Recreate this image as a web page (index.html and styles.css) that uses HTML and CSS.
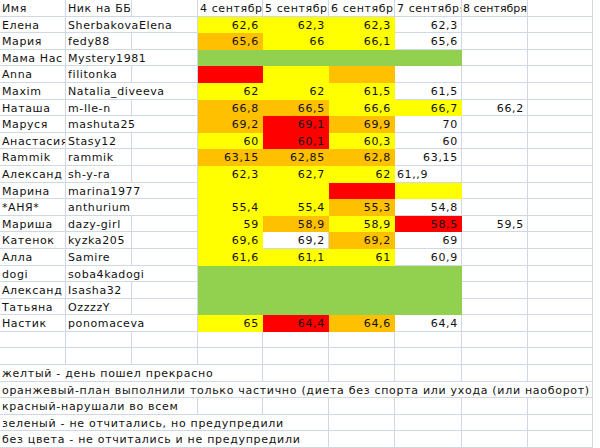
FILE: index.html
```html
<!DOCTYPE html>
<html lang="ru">
<head>
<meta charset="utf-8">
<title>Таблица</title>
<link rel="stylesheet" href="styles.css">
</head>
<body>
<div class="sheet">
  <div class="c">Имя</div><div class="c">Ник на ББ</div><div class="c"></div><div class="c">4 сентября</div><div class="c">5 сентября</div><div class="c">6 сентября</div><div class="c">7 сентября</div><div class="c h8">8 сентября</div><div class="c"></div>

  <div class="c">Елена</div><div class="c s2">SherbakovaElena</div><div class="c n y">62,6</div><div class="c n y">62,3</div><div class="c n y">62,3</div><div class="c n">62,3</div><div class="c"></div><div class="c"></div>

  <div class="c">Мария</div><div class="c">fedy88</div><div class="c"></div><div class="c n o">65,6</div><div class="c n y">66</div><div class="c n y">66,1</div><div class="c n">65,6</div><div class="c"></div><div class="c"></div>

  <div class="c">Мама Нас</div><div class="c s2">Mystery1981</div><div class="c g"></div><div class="c g"></div><div class="c g"></div><div class="c g"></div><div class="c"></div><div class="c"></div>

  <div class="c">Anna</div><div class="c">filitonka</div><div class="c"></div><div class="c r"></div><div class="c y"></div><div class="c o"></div><div class="c"></div><div class="c"></div><div class="c"></div>

  <div class="c">Maxim</div><div class="c s2">Natalia_diveeva</div><div class="c n y">62</div><div class="c n y">62</div><div class="c n y">61,5</div><div class="c n">61,5</div><div class="c"></div><div class="c"></div>

  <div class="c">Наташа</div><div class="c">m-lle-n</div><div class="c"></div><div class="c n o">66,8</div><div class="c n o">66,5</div><div class="c n y">66,6</div><div class="c n y">66,7</div><div class="c n">66,2</div><div class="c"></div>

  <div class="c">Маруся</div><div class="c s2">mashuta25</div><div class="c n o">69,2</div><div class="c n r">69,1</div><div class="c n o">69,9</div><div class="c n">70</div><div class="c"></div><div class="c"></div>

  <div class="c">Анастасия</div><div class="c">Stasy12</div><div class="c"></div><div class="c n y">60</div><div class="c n r">60,1</div><div class="c n y">60,3</div><div class="c n">60</div><div class="c"></div><div class="c"></div>

  <div class="c">Rammik</div><div class="c">rammik</div><div class="c"></div><div class="c n o">63,15</div><div class="c n o">62,85</div><div class="c n o">62,8</div><div class="c n">63,15</div><div class="c"></div><div class="c"></div>

  <div class="c">Александ</div><div class="c">sh-y-ra</div><div class="c"></div><div class="c n y">62,3</div><div class="c n y">62,7</div><div class="c n y">62</div><div class="c">61,,9</div><div class="c"></div><div class="c"></div>

  <div class="c">Марина</div><div class="c s2">marina1977</div><div class="c y"></div><div class="c y"></div><div class="c r"></div><div class="c y"></div><div class="c"></div><div class="c"></div>

  <div class="c">*АНЯ*</div><div class="c s2">anthurium</div><div class="c n y">55,4</div><div class="c n y">55,4</div><div class="c n o">55,3</div><div class="c n">54,8</div><div class="c"></div><div class="c"></div>

  <div class="c">Мариша</div><div class="c">dazy-girl</div><div class="c"></div><div class="c n y">59</div><div class="c n o">58,9</div><div class="c n y">58,9</div><div class="c n r">58,5</div><div class="c n">59,5</div><div class="c"></div>

  <div class="c">Катенок</div><div class="c">kyzka205</div><div class="c"></div><div class="c n y">69,6</div><div class="c n">69,2</div><div class="c n o">69,2</div><div class="c n">69</div><div class="c"></div><div class="c"></div>

  <div class="c">Алла</div><div class="c">Samire</div><div class="c"></div><div class="c n y">61,6</div><div class="c n y">61,1</div><div class="c n y">61</div><div class="c n">60,9</div><div class="c"></div><div class="c"></div>

  <div class="c">dogi</div><div class="c s2">soba4kadogi</div><div class="c g"></div><div class="c g"></div><div class="c g"></div><div class="c g"></div><div class="c"></div><div class="c"></div>

  <div class="c">Александ</div><div class="c">Isasha32</div><div class="c"></div><div class="c g"></div><div class="c g"></div><div class="c g"></div><div class="c g"></div><div class="c"></div><div class="c"></div>

  <div class="c">Татьяна</div><div class="c">OzzzzY</div><div class="c"></div><div class="c g"></div><div class="c g"></div><div class="c g"></div><div class="c g"></div><div class="c"></div><div class="c"></div>

  <div class="c">Настик</div><div class="c s2">ponomaceva</div><div class="c n y">65</div><div class="c n r">64,4</div><div class="c n o">64,6</div><div class="c n">64,4</div><div class="c"></div><div class="c"></div>

  <div class="c"></div><div class="c"></div><div class="c"></div><div class="c"></div><div class="c"></div><div class="c"></div><div class="c"></div><div class="c"></div><div class="c"></div>
  <div class="c"></div><div class="c"></div><div class="c"></div><div class="c"></div><div class="c"></div><div class="c"></div><div class="c"></div><div class="c"></div><div class="c"></div>

  <div class="c s4 lg">желтый - день пошел прекрасно</div><div class="c"></div><div class="c"></div><div class="c"></div><div class="c"></div><div class="c"></div>

  <div class="c s9 lg">оранжевый-план выполнили только частично (диета без спорта или ухода (или наоборот)</div>

  <div class="c s3 lg">красный-нарушали во всем</div><div class="c"></div><div class="c"></div><div class="c"></div><div class="c"></div><div class="c"></div><div class="c"></div>

  <div class="c s5 lg">зеленый - не отчитались, но предупредили</div><div class="c"></div><div class="c"></div><div class="c"></div><div class="c"></div>

  <div class="c s5 lg">без цвета - не отчитались и не предупредили</div><div class="c"></div><div class="c"></div><div class="c"></div><div class="c"></div>
</div>
</body>
</html>
```
FILE: styles.css
```css
html, body { margin: 0; padding: 0; background: #fff; }
.sheet { display: grid; grid-template-columns: 66px 66px 66px 65px 66px 66px 67px 66px 65px; grid-auto-rows: 16.6px; width: 593px; font-family: "DejaVu Sans", sans-serif; font-size: 11px; color: #111; }
.c { box-sizing: border-box; border-right: 1px solid #d0d7e5; border-bottom: 1px solid #d0d7e5; padding: 1px 3px 0 2px; line-height: 16px; white-space: nowrap; overflow: hidden; letter-spacing: 0.6px; }
.n { text-align: right; letter-spacing: 0.7px; }
.h8 { letter-spacing: 0; padding-left: 1px; }
.lg { letter-spacing: 0.7px; }
.s2 { grid-column: span 2; }
.s3 { grid-column: span 3; }
.s4 { grid-column: span 4; }
.s5 { grid-column: span 5; }
.s9 { grid-column: span 9; }
.y { background: #ffff00; border-color: #ffff00; }
.o { background: #ffc000; border-color: #ffc000; }
.r { background: #ff0000; border-color: #ff0000; }
.g { background: #92d050; border-color: #92d050; }
```
